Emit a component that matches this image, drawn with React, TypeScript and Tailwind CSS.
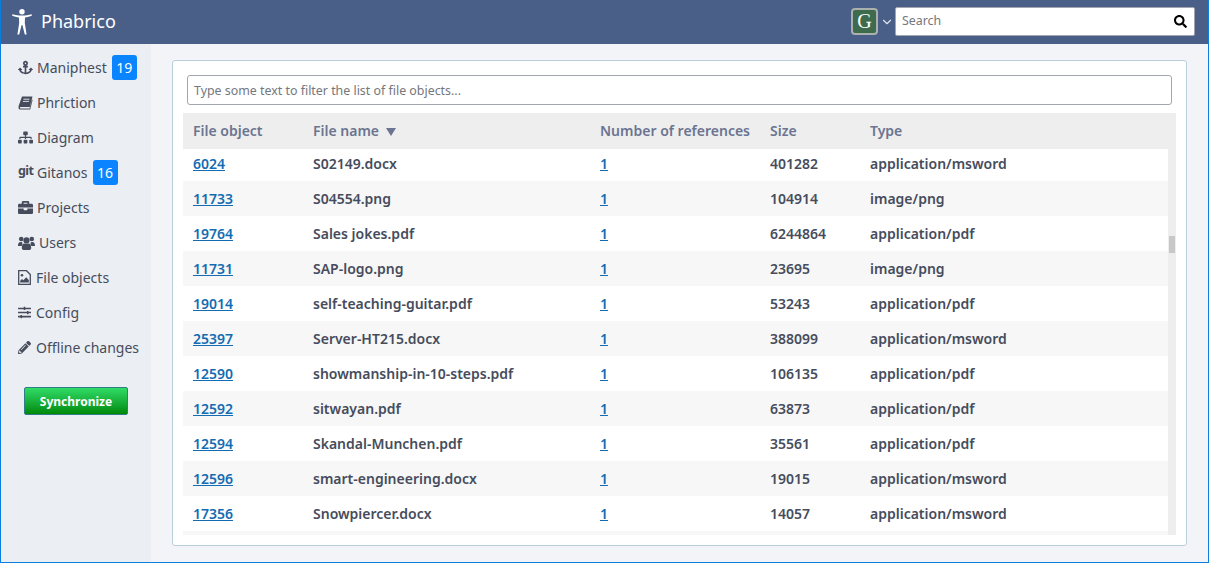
import { type ReactNode } from 'react';
import { ChevronDown } from 'lucide-react';
import { FaAnchor, FaBriefcase, FaPencilAlt, FaSearch, FaSitemap, FaSlidersH } from 'react-icons/fa';

const rows = [
  ['6024', 'S02149.docx', '401282', 'application/msword'],
  ['11733', 'S04554.png', '104914', 'image/png'],
  ['19764', 'Sales jokes.pdf', '6244864', 'application/pdf'],
  ['11731', 'SAP-logo.png', '23695', 'image/png'],
  ['19014', 'self-teaching-guitar.pdf', '53243', 'application/pdf'],
  ['25397', 'Server-HT215.docx', '388099', 'application/msword'],
  ['12590', 'showmanship-in-10-steps.pdf', '106135', 'application/pdf'],
  ['12592', 'sitwayan.pdf', '63873', 'application/pdf'],
  ['12594', 'Skandal-Munchen.pdf', '35561', 'application/pdf'],
  ['12596', 'smart-engineering.docx', '19015', 'application/msword'],
  ['17356', 'Snowpiercer.docx', '14057', 'application/msword'],
];

function BookIcon() {
  return (
    <svg width="15" height="14" viewBox="0 0 15 14">
      <path d="M4 0.5 H14.5 L11.8 11 H2.6 C1.8 11 1.6 12.5 2.6 12.5 H11.6 L14 3.5 L14.6 4 L12.2 13.5 H2.2 C0.4 13.5 0.2 11.5 0.8 9.5 Z" fill="currentColor" />
      <path d="M5.5 3.2 H11.5 M5 5.4 H11" stroke="#ebeef2" strokeWidth="0.9" />
    </svg>
  );
}

function UsersIcon() {
  return (
    <svg width="17" height="14" viewBox="0 0 17 14" fill="currentColor">
      <circle cx="3.2" cy="3" r="2.3" />
      <circle cx="13.8" cy="3" r="2.3" />
      <circle cx="8.5" cy="4.4" r="3.1" />
      <path d="M0 10 C0 6.6 1.4 6 3.2 6 C3.8 6 4.1 6.2 4.4 6.5 C4.3 8 4.6 9 3.6 10 Z" />
      <path d="M17 10 C17 6.6 15.6 6 13.8 6 C13.2 6 12.9 6.2 12.6 6.5 C12.7 8 12.4 9 13.4 10 Z" />
      <path d="M3.8 12 C3.8 8.5 5 7.4 6.2 7.4 C7 8 10 8 10.8 7.4 C12 7.4 13.2 8.5 13.2 12 C13.2 13.5 12 14 11 14 H6 C5 14 3.8 13.5 3.8 12 Z" />
    </svg>
  );
}

function FileImageIcon() {
  return (
    <svg width="13" height="15" viewBox="0 0 13 15">
      <path d="M0.7 0.7 H8.5 L12.3 4.5 V14.3 H0.7 Z" fill="none" stroke="currentColor" strokeWidth="1.3" />
      <circle cx="4" cy="5.2" r="1.3" fill="currentColor" />
      <path d="M2.2 12.6 V10.8 L4 9 L5.4 10.2 L8.2 7.2 L10.8 10 V12.6 Z" fill="currentColor" />
    </svg>
  );
}

const menu: { icon: ReactNode; iconWidth: string; label: string; badge?: string }[] = [
  { icon: <FaAnchor size={15} />, iconWidth: 'w-[19px]', label: 'Maniphest', badge: '19' },
  { icon: <BookIcon />, iconWidth: 'w-[19px]', label: 'Phriction' },
  { icon: <FaSitemap size={15} />, iconWidth: 'w-[19px]', label: 'Diagram' },
  { icon: <span className="text-[12.5px] font-bold leading-none tracking-[-0.6px] -mt-[3px]">git</span>, iconWidth: 'w-[19px]', label: 'Gitanos', badge: '16' },
  { icon: <FaBriefcase size={15} />, iconWidth: 'w-[19px]', label: 'Projects' },
  { icon: <UsersIcon />, iconWidth: 'w-[21px]', label: 'Users' },
  { icon: <FileImageIcon />, iconWidth: 'w-[18px]', label: 'File objects' },
  { icon: <FaSlidersH size={13} />, iconWidth: 'w-[18px]', label: 'Config' },
  { icon: <FaPencilAlt size={13} />, iconWidth: 'w-[18px]', label: 'Offline changes' },
];

function Logo() {
  return (
    <svg width="20" height="26" viewBox="0 0 20 26" fill="white">
      <circle cx="10" cy="2.7" r="2.7" />
      <path d="M0 6.4 L0.4 5.2 C3 6 7 6.6 10 6.6 C13 6.6 17 6 19.6 5.2 L20 6.4 C18 7.4 15 8.2 13 8.6 L12.8 14 L14.6 25.4 L12.8 25.6 L10.4 16 H9.6 L7.2 25.6 L5.4 25.4 L7.2 14 L7 8.6 C5 8.2 2 7.4 0 6.4 Z" />
    </svg>
  );
}

export default function App() {
  return (
    <div className="h-[563px] w-[1209px] flex flex-col border-x border-b border-[#0a7fe0] font-['Noto_Sans',sans-serif] text-[14px] text-[#464c5c] overflow-hidden">
      {/* top bar */}
      <header className="h-[44px] shrink-0 -mx-px flex items-center bg-[#4a5f88] pl-[12px] pr-[14px]">
        <Logo />
        <span className="ml-[9px] -mt-[1px] text-[18px] text-white">Phabrico</span>
        <div className="ml-auto flex items-center -mt-[2px]">
          <div className="w-[27px] h-[27px] rounded-[4px] border-2 border-[#a9b0ae] bg-[#3d6b4c] flex items-center justify-center font-['Liberation_Serif',serif] text-[20px] text-white">G</div>
          <ChevronDown size={14} strokeWidth={2} className="ml-[2px] mr-px mt-[2px] text-[#dfe4ee]" />
          <div className="w-[300px] h-[29px] rounded-[2px] border border-[#a1a6b0] bg-white flex items-center justify-between pl-[6px] pr-[7px]">
            <span className="text-[12.4px] text-[#74777d]">Search</span>
            <FaSearch size={13} className="text-black" />
          </div>
        </div>
      </header>

      <div className="flex-1 min-h-0 flex">
        {/* side menu */}
        <aside className="w-[150px] shrink-0 bg-[#ebeef2] pt-[6px]">
          {menu.map((m) => (
            <div key={m.label} className="h-[35px] pl-[17px] flex items-center">
              <span className={`${m.iconWidth} flex justify-start text-[#464c5c]`}>{m.icon}</span>
              <span>{m.label}</span>
              {m.badge && (
                <span className="ml-[5px] w-[25px] h-[25px] rounded-[3px] bg-[#0a84ff] text-white flex items-center justify-center">{m.badge}</span>
              )}
            </div>
          ))}
          <button className="mt-[22px] ml-[23px] w-[104px] h-[28px] rounded-[2px] border border-[#2f7d86] bg-gradient-to-b from-[#2fdc66] to-[#008a00] text-white text-[12px] font-bold pt-[2px]">
            Synchronize
          </button>
        </aside>

        {/* content */}
        <main className="flex-1 min-w-0 bg-[#f3f4f7] pt-[16px] pl-[21px] pr-[21px] pb-[16px]">
          <div className="h-full rounded-[3px] border border-[#b9cfdf] bg-white pt-[14px] pl-[10px] pr-[10px] pb-[10px] flex flex-col">
            <div className="mx-[4px] h-[30px] shrink-0 rounded-[3px] border border-[#a1a6b0] flex items-center pl-[6px] pt-[2px] text-[12.4px] text-[#74777d]">
              Type some text to filter the list of file objects...
            </div>
            <div className="mt-[8px] flex-1 min-h-0 flex flex-col">
              <div className="h-[36px] shrink-0 bg-[#eeeeee] grid grid-cols-[130px_287px_170px_100px_1fr] items-center text-[14px] font-semibold text-[#6b7490] pb-[1px]">
                <span className="pl-[10px]">File object</span>
                <span className="flex items-center">
                  File name
                  <span className="ml-[7px] mt-[3px] w-0 h-0 border-x-[5px] border-x-transparent border-t-[8px] border-t-[#6b7490]" />
                </span>
                <span>Number of references</span>
                <span>Size</span>
                <span>Type</span>
              </div>
              <div className="flex-1 min-h-0 flex">
                <div className="flex-1 min-w-0 overflow-hidden">
                  <div className="-mt-[3px]">
                    {rows.map((r, i) => (
                      <div key={r[0]} className={`h-[35px] grid grid-cols-[130px_287px_170px_100px_1fr] items-center font-semibold text-[#464c5c] ${i % 2 === 1 ? 'bg-[#f7f7f7]' : 'bg-white'}`}>
                        <a className="pl-[10px] text-[#136cb2] underline">{r[0]}</a>
                        <span>{r[1]}</span>
                        <a className="text-[#136cb2] underline">1</a>
                        <span>{r[2]}</span>
                        <span>{r[3]}</span>
                      </div>
                    ))}
                    <div className="h-[35px] bg-[#f7f7f7]" />
                  </div>
                </div>
                {/* scrollbar */}
                <div className="w-[8px] shrink-0 bg-[#eeeeee] pt-[87px]">
                  <div className="mx-px h-[17px] bg-[#c8c8c8]" />
                </div>
              </div>
            </div>
          </div>
        </main>
      </div>
    </div>
  );
}
